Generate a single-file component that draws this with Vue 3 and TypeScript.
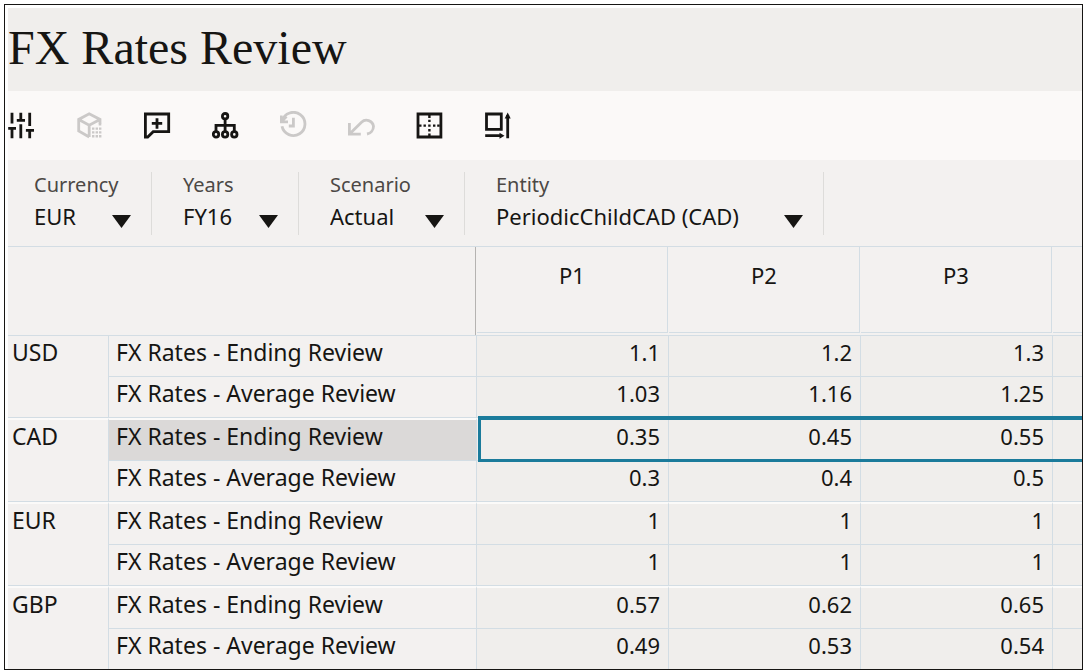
<script setup lang="ts">
import { ref } from 'vue'

interface Dimension {
  id: string
  label: string
  width: number
  options: string[]
}

interface RateRow {
  name: string
  values: string[]
  selected?: boolean
}

interface CurrencyGroup {
  currency: string
  rows: RateRow[]
}

const dimensions: Dimension[] = [
  { id: 'currency', label: 'Currency', width: 97, options: ['EUR'] },
  { id: 'years', label: 'Years', width: 95, options: ['FY16'] },
  { id: 'scenario', label: 'Scenario', width: 114, options: ['Actual'] },
  { id: 'entity', label: 'Entity', width: 307, options: ['PeriodicChildCAD (CAD)'] },
]

const selection = ref<Record<string, string>>({
  currency: 'EUR',
  years: 'FY16',
  scenario: 'Actual',
  entity: 'PeriodicChildCAD (CAD)',
})

const periods: string[] = ['P1', 'P2', 'P3']

const ending = 'FX Rates - Ending Review'
const average = 'FX Rates - Average Review'

const groups: CurrencyGroup[] = [
  {
    currency: 'USD',
    rows: [
      { name: ending, values: ['1.1', '1.2', '1.3'] },
      { name: average, values: ['1.03', '1.16', '1.25'] },
    ],
  },
  {
    currency: 'CAD',
    rows: [
      { name: ending, values: ['0.35', '0.45', '0.55'], selected: true },
      { name: average, values: ['0.3', '0.4', '0.5'] },
    ],
  },
  {
    currency: 'EUR',
    rows: [
      { name: ending, values: ['1', '1', '1'] },
      { name: average, values: ['1', '1', '1'] },
    ],
  },
  {
    currency: 'GBP',
    rows: [
      { name: ending, values: ['0.57', '0.62', '0.65'] },
      { name: average, values: ['0.49', '0.53', '0.54'] },
    ],
  },
]
</script>

<template>
  <div class="page">
    <main class="frame">
      <header class="title-bar">
        <h1>FX Rates Review</h1>
      </header>

      <div class="toolbar" role="toolbar" aria-label="Form actions">
        <button type="button" aria-label="Adjust">
          <svg viewBox="0 0 28 28">
            <path d="M4 1.7V12.5M4 27.3V17.3M.2 17.3H8M12.8 1.7V9M8.8 9.3H17M12.8 13.3V27.3M21.7 1.7V15M21.7 27.3V19.4M17.9 19.4H26" />
          </svg>
        </button>
        <button type="button" aria-label="Cube details" disabled>
          <svg viewBox="0 0 28 28">
            <path d="M24 13V8.4L13.2 2.8L2.7 8.4V20L13.2 26M2.7 8.4L13.2 14.2L24 8.4M13.2 14.2V26" />
            <path class="fill" d="M16 16.4h2.400v2.400H16zM19.600 16.400H22v2.400h-2.400zM23 16.400h2.400v2.400H23zM16 20.200h2.400v2.400H16zM19.600 20.200H22v2.400h-2.400zM23 20.200h2.400v2.400H23zM16 24h2.400v2.400H16zM19.600 24H22v2.400h-2.400zM23 24h2.400v2.400H23zM22.700 12.700h2.600v1.800h-2.600z" />
          </svg>
        </button>
        <button type="button" aria-label="Add comment">
          <svg viewBox="0 0 28 28">
            <path d="M1.4 3H24.7V20.7H9.2L3.7 26H1.4ZM13 7.3V17.7M7.8 12.4H18.2" />
          </svg>
        </button>
        <button type="button" aria-label="Hierarchy">
          <svg viewBox="0 0 28 28">
            <circle cx="13.1" cy="5.2" r="2.7" />
            <circle cx="4" cy="23.4" r="2.7" />
            <circle cx="13.1" cy="23.4" r="2.7" />
            <circle cx="22.3" cy="23.4" r="2.7" />
            <path d="M13.1 8V20.5M4 20.5V14.4H22.3V20.5" />
          </svg>
        </button>
        <button type="button" aria-label="History" disabled>
          <svg viewBox="0 0 28 28">
            <path d="M1.2 4.5V10.900H8M2.200 9.800A11.600 11.600 0 1 1 2 15.300M1.500 10.500L6.500 5.500M13.400 6.800V15H8.800" />
          </svg>
        </button>
        <button type="button" aria-label="Undo" disabled>
          <svg viewBox="0 0 28 28">
            <path d="M1.4 12V23.2H12.8M1.800 22.800L13.500 11.200A7.200 7.200 0 0 1 25.500 15.200A8 8 0 0 1 19 23" />
          </svg>
        </button>
        <button type="button" aria-label="Grid lines">
          <svg viewBox="0 0 28 28">
            <path d="M2 3H24.9V26H2Z" />
            <path class="fill" d="M12.200 4h2.400v3h-2.400zM12.200 8.700h2.400v2.400h-2.400zM12.200 13.400h2.400v2.400h-2.400zM12.200 18h2.400v2.400h-2.400zM12.200 22.500h2.400v3h-2.400zM3 13.400h2.500v2.400H3zM7.500 13.400h2.400v2.400H7.500zM17 13.400h2.400v2.400H17zM21.200 13.400h2.500v2.400h-2.500z" />
          </svg>
        </button>
        <button type="button" aria-label="Resize">
          <svg viewBox="0 0 28 28">
            <path d="M2.500 3H17.300V18.300H2.500ZM1.200 24.700H17M23.700 27.200V4" />
            <path class="fill" d="M15.500 21.700L20.500 24.700L15.500 27.700ZM20.700 7.500L23.700 1.500L26.700 7.500Z" />
          </svg>
        </button>
      </div>

      <section class="pov" aria-label="Point of view">
        <div v-for="d in dimensions" :key="d.id" class="dimension">
          <label :for="d.id">{{ d.label }}</label>
          <div class="picker" :style="{ width: d.width + 'px' }">
            <select :id="d.id" v-model="selection[d.id]">
              <option v-for="o in d.options" :key="o">{{ o }}</option>
            </select>
            <svg class="caret" viewBox="0 0 19 13" aria-hidden="true">
              <path d="M0 0H19L9.500 13Z" />
            </svg>
          </div>
        </div>
      </section>

      <div class="grid">
        <table>
          <colgroup>
            <col class="col-currency" />
            <col class="col-name" />
            <col v-for="p in periods" :key="p" class="col-period" />
            <col />
          </colgroup>
          <thead>
            <tr>
              <td colspan="2" class="corner"><div></div></td>
              <th v-for="p in periods" :key="p" scope="col"><div>{{ p }}</div></th>
              <td><div></div></td>
            </tr>
          </thead>
          <tbody v-for="g in groups" :key="g.currency">
            <tr v-for="(r, i) in g.rows" :key="r.name" :class="{ selected: r.selected }">
              <th v-if="i === 0" scope="rowgroup" :rowspan="g.rows.length" class="currency">{{ g.currency }}</th>
              <th scope="row" class="name">{{ r.name }}</th>
              <td v-for="(v, c) in r.values" :key="c">{{ v }}</td>
              <td></td>
            </tr>
          </tbody>
        </table>
      </div>
    </main>
  </div>
</template>

<style>
body {
  background: #fff;
}
</style>

<style scoped>
.page {
  box-sizing: border-box;
  height: 100vh;
  padding: 4px 2px 2px 4px;
  font-family: 'Noto Sans', 'Open Sans', sans-serif;
  font-size: 22px;
  line-height: 30px;
  color: #161513;
}

.frame {
  box-sizing: border-box;
  display: flex;
  flex-direction: column;
  height: 100%;
  padding: 3px 0 0 3px;
  overflow: hidden;
  border: 1px solid #161513;
}

.title-bar {
  flex: none;
  height: 83px;
  background: #f0eeec;
}

h1 {
  margin: 0;
  padding-top: 12px;
  font-family: Georgia, 'Liberation Serif', serif;
  font-size: 48px;
  font-weight: 400;
  line-height: 56px;
}

.toolbar {
  box-sizing: border-box;
  display: flex;
  flex: none;
  gap: 40px;
  align-items: center;
  height: 69px;
  padding-bottom: 2px;
  background: #fbf9f8;
}

.toolbar button {
  width: 28px;
  height: 28px;
  padding: 0;
  color: #161513;
  background: none;
  border: 0;
}

.toolbar button:disabled {
  color: #cbc9c8;
}

.toolbar svg {
  display: block;
  width: 28px;
  height: 28px;
  fill: none;
  stroke: currentColor;
  stroke-width: 2.8;
}

.toolbar .fill {
  fill: currentColor;
  stroke: none;
}

.pov {
  display: flex;
  flex: none;
  padding: 12px 0 11px;
  background: #f3f1f0;
}

.dimension {
  height: 63px;
  padding: 0 20px 0 31px;
  border-right: 1px solid #dddcda;
}

.dimension:first-child {
  padding-left: 26px;
}

.dimension label {
  display: block;
  font-size: 20px;
  line-height: 26px;
  color: #4c4845;
}

.picker {
  position: relative;
}

select {
  display: block;
  width: 100%;
  height: 36px;
  padding: 0;
  font: inherit;
  color: inherit;
  appearance: none;
  background: none;
  border: 0;
}

.caret {
  position: absolute;
  top: 17px;
  right: 0;
  width: 19px;
  height: 13px;
  pointer-events: none;
  fill: #161513;
}

.grid {
  flex: 1;
  min-height: 0;
  overflow: hidden;
  background: #f3f1f0;
  border-top: 1px solid #d3dde4;
}

table {
  width: 100%;
  table-layout: fixed;
  border-spacing: 0;
}

.col-currency {
  width: 101px;
}

.col-name {
  width: 368px;
}

.col-period {
  width: 192px;
}

th,
td {
  box-sizing: border-box;
  padding: 0;
  font-weight: 400;
}

thead th,
thead td {
  height: 89px;
  vertical-align: top;
  border-bottom: 1px solid #d3dde4;
}

thead div {
  box-sizing: border-box;
  height: 86px;
  margin-right: 1px;
  padding-top: 13px;
  border-right: 1px solid #d3dde4;
  border-bottom: 1px solid #d3dde4;
}

thead .corner div {
  height: 88px;
  border-right-color: #b5b3b1;
  border-bottom: 0;
}

thead td:last-child div {
  margin-right: 0;
  border-right: 0;
}

tbody th,
tbody td {
  height: 41px;
  padding: 0 8px 8px;
  border-right: 1px solid #d3dde4;
  border-bottom: 1px solid #d3dde4;
}

tbody td {
  text-align: right;
  background: #f0eeec;
}

tbody td:last-child {
  border-right: 0;
}

tbody th {
  font-size: 23px;
  text-align: left;
}

tbody .name {
  padding-left: 7px;
}

tbody + tbody tr:first-child > * {
  height: 43px;
  border-top: 2px solid #fbfaf9;
}

tbody .currency {
  padding: 1px 4px;
  vertical-align: top;
}

.selected .name {
  background: #dbd9d8;
}

.selected .name + td {
  position: relative;
}

/* Outline around the active row, running past the visible columns. */
.selected .name + td::after {
  position: absolute;
  top: -4px;
  left: 1px;
  box-sizing: border-box;
  width: 200vw;
  height: 46px;
  pointer-events: none;
  content: '';
  border: 3px solid #1b7b9b;
  border-top-width: 4px;
}
</style>
